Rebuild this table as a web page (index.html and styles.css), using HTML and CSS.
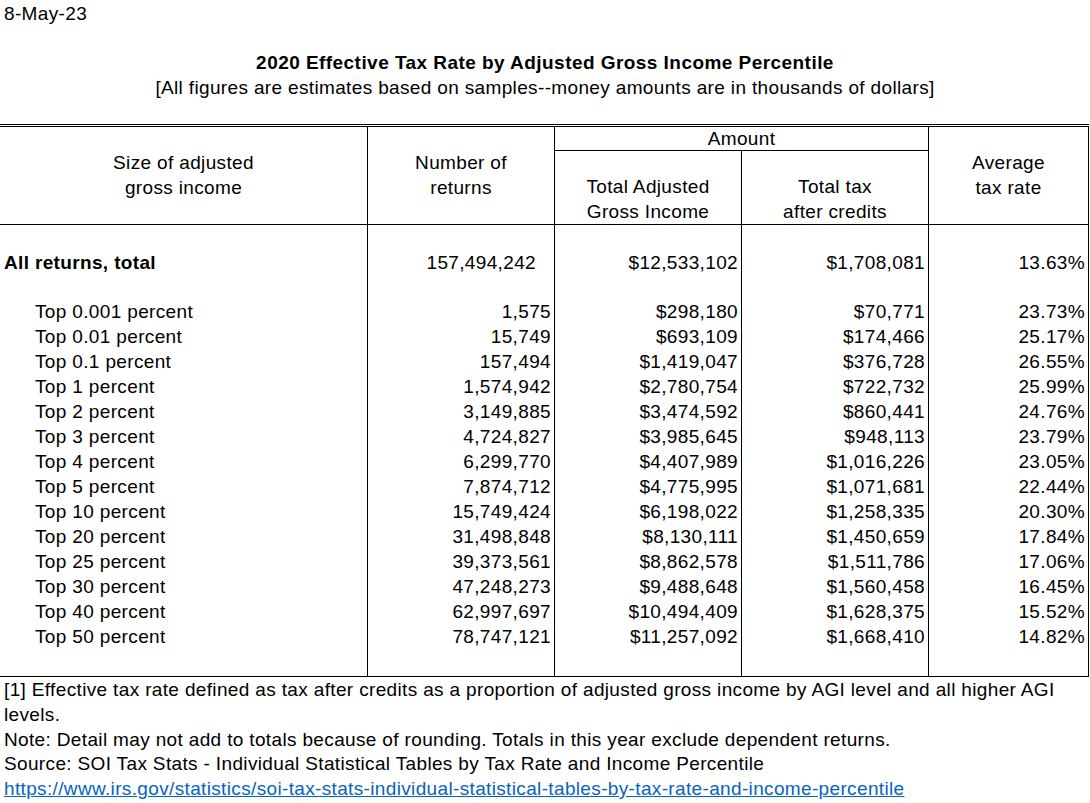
FILE: index.html
```html
<!DOCTYPE html>
<html lang="en">
<head>
<meta charset="utf-8">
<title>2020 Effective Tax Rate by Adjusted Gross Income Percentile</title>
<link rel="stylesheet" href="styles.css">
</head>
<body>
<div class="page">
  <div class="date">8-May-23</div>
  <h1 class="title">2020 Effective Tax Rate by Adjusted Gross Income Percentile</h1>
  <div class="subtitle">[All figures are estimates based on samples--money amounts are in thousands of dollars]</div>

  <table class="data">
    <colgroup>
      <col class="c1"><col class="c2"><col class="c3"><col class="c4"><col class="c5">
    </colgroup>
    <thead>
      <tr class="h1">
        <th rowspan="2" class="hd-span">Size of adjusted<br>gross income</th>
        <th rowspan="2" class="hd-span">Number of<br>returns</th>
        <th colspan="2" class="amount">Amount</th>
        <th rowspan="2" class="hd-span">Average<br>tax rate</th>
      </tr>
      <tr class="h2">
        <th class="hd-sub">Total Adjusted<br>Gross Income</th>
        <th class="hd-sub">Total tax<br>after credits</th>
      </tr>
    </thead>
    <tbody>
      <tr class="gap-a"><td></td><td></td><td></td><td></td><td></td></tr>
      <tr class="total">
        <td class="label">All returns, total</td>
        <td class="num num-total">157,494,242</td>
        <td class="num">$12,533,102</td>
        <td class="num">$1,708,081</td>
        <td class="num">13.63%</td>
      </tr>
      <tr class="gap-b"><td></td><td></td><td></td><td></td><td></td></tr>
      <tr class="row"><td class="label sub">Top 0.001 percent</td><td class="num">1,575</td><td class="num">$298,180</td><td class="num">$70,771</td><td class="num">23.73%</td></tr>
      <tr class="row"><td class="label sub">Top 0.01 percent</td><td class="num">15,749</td><td class="num">$693,109</td><td class="num">$174,466</td><td class="num">25.17%</td></tr>
      <tr class="row"><td class="label sub">Top 0.1 percent</td><td class="num">157,494</td><td class="num">$1,419,047</td><td class="num">$376,728</td><td class="num">26.55%</td></tr>
      <tr class="row"><td class="label sub">Top 1 percent</td><td class="num">1,574,942</td><td class="num">$2,780,754</td><td class="num">$722,732</td><td class="num">25.99%</td></tr>
      <tr class="row"><td class="label sub">Top 2 percent</td><td class="num">3,149,885</td><td class="num">$3,474,592</td><td class="num">$860,441</td><td class="num">24.76%</td></tr>
      <tr class="row"><td class="label sub">Top 3 percent</td><td class="num">4,724,827</td><td class="num">$3,985,645</td><td class="num">$948,113</td><td class="num">23.79%</td></tr>
      <tr class="row"><td class="label sub">Top 4 percent</td><td class="num">6,299,770</td><td class="num">$4,407,989</td><td class="num">$1,016,226</td><td class="num">23.05%</td></tr>
      <tr class="row"><td class="label sub">Top 5 percent</td><td class="num">7,874,712</td><td class="num">$4,775,995</td><td class="num">$1,071,681</td><td class="num">22.44%</td></tr>
      <tr class="row"><td class="label sub">Top 10 percent</td><td class="num">15,749,424</td><td class="num">$6,198,022</td><td class="num">$1,258,335</td><td class="num">20.30%</td></tr>
      <tr class="row"><td class="label sub">Top 20 percent</td><td class="num">31,498,848</td><td class="num">$8,130,111</td><td class="num">$1,450,659</td><td class="num">17.84%</td></tr>
      <tr class="row"><td class="label sub">Top 25 percent</td><td class="num">39,373,561</td><td class="num">$8,862,578</td><td class="num">$1,511,786</td><td class="num">17.06%</td></tr>
      <tr class="row"><td class="label sub">Top 30 percent</td><td class="num">47,248,273</td><td class="num">$9,488,648</td><td class="num">$1,560,458</td><td class="num">16.45%</td></tr>
      <tr class="row"><td class="label sub">Top 40 percent</td><td class="num">62,997,697</td><td class="num">$10,494,409</td><td class="num">$1,628,375</td><td class="num">15.52%</td></tr>
      <tr class="row"><td class="label sub">Top 50 percent</td><td class="num">78,747,121</td><td class="num">$11,257,092</td><td class="num">$1,668,410</td><td class="num">14.82%</td></tr>
      <tr class="gap-end"><td></td><td></td><td></td><td></td><td></td></tr>
    </tbody>
  </table>

  <div class="notes">
    <p>[1] Effective tax rate defined as tax after credits as a proportion of adjusted gross income by AGI level and all higher AGI levels.</p>
    <p>Note: Detail may not add to totals because of rounding. Totals in this year exclude dependent returns.</p>
    <p>Source: SOI Tax Stats - Individual Statistical Tables by Tax Rate and Income Percentile</p>
    <p><a class="link" href="#">https://www.irs.gov/statistics/soi-tax-stats-individual-statistical-tables-by-tax-rate-and-income-percentile</a></p>
  </div>
</div>
</body>
</html>
```

FILE: styles.css
```css
html, body {
  margin: 0;
  padding: 0;
  background: #ffffff;
}

body {
  font-family: "Liberation Sans", Arial, sans-serif;
  font-size: 19px;
  line-height: 25px;
  letter-spacing: 0.35px;
  color: #000000;
}

.page {
  width: 1090px;
}

.date {
  padding: 1px 0 0 4px;
  height: 27px;
}

.title {
  margin: 22px 0 0 0;
  font-size: 19px;
  line-height: 25px;
  font-weight: bold;
  letter-spacing: 0.45px;
  text-align: center;
}

.subtitle {
  text-align: center;
  height: 25px;
}

.data {
  margin-top: 24px;
  width: 1089px;
  table-layout: fixed;
  border-collapse: separate;
  border-spacing: 0;
  border-top: 3px double #000000;
}

.c1 { width: 368px; }
.c2 { width: 187px; }
.c3 { width: 187px; }
.c4 { width: 187px; }
.c5 { width: 160px; }

.data th,
.data td {
  padding: 0;
  border-right: 1px solid #000000;
  font-weight: normal;
  white-space: nowrap;
}

.data th {
  text-align: center;
  vertical-align: top;
}

.h1 { height: 24px; }
.h2 { height: 74px; }

.data .hd-span {
  padding-top: 23px;
  border-bottom: 1px solid #000000;
}

.data .amount {
  line-height: 23px;
  height: 23px;
  border-bottom: 1px solid #000000;
}

.data .hd-sub {
  padding-top: 23px;
  border-bottom: 1px solid #000000;
}

.gap-a { height: 25px; }
.total { height: 25px; }
.gap-b { height: 24px; }
.row { height: 25px; }
.gap-end { height: 28px; }

.data .gap-end td {
  border-bottom: 1px solid #000000;
}

.data .total .label {
  font-weight: bold;
}

.data td.label {
  padding-left: 4px;
  text-align: left;
}

.data td.label.sub {
  padding-left: 35px;
}

.data td.num {
  text-align: right;
  padding-right: 3px;
}

.data td.num-total {
  padding-right: 18px;
}

.notes {
  padding: 1px 4px 0 4px;
  width: 1070px;
  line-height: 24.75px;
}

.notes p {
  margin: 0;
}

.link {
  color: #0563c1;
  text-decoration: underline;
}
```
